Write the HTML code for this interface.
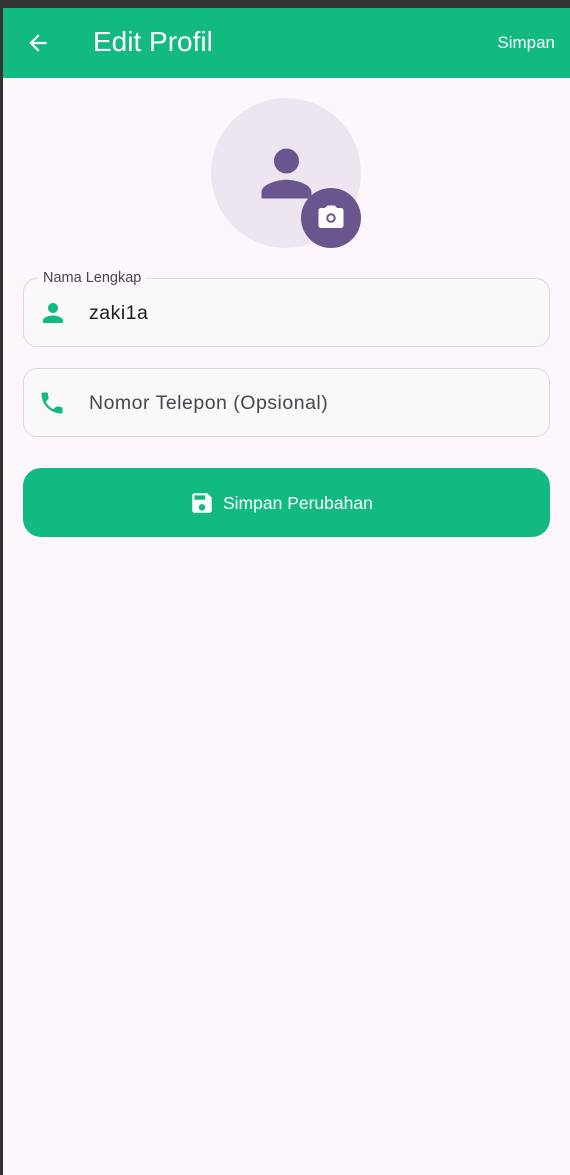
<!DOCTYPE html>
<html><head><meta charset="utf-8"><style>
*{margin:0;padding:0;box-sizing:border-box}
body{width:570px;height:1175px;background:#333;position:relative;overflow:hidden;font-family:"Liberation Sans",sans-serif}
.page{position:absolute;left:3px;top:8px;right:0;bottom:0;background:#fdf7fd}
.hdr{position:absolute;left:3px;top:8px;right:0;height:70px;background:#12b981;color:#fff}
.f{position:absolute;left:23px;width:527px;height:69px;border:1px solid #ddd8dd;border-radius:14px;background:#f9f9f9}
</style></head><body>
<div class="page"></div>
<div class="hdr">
<svg style="position:absolute;left:22px;top:22px" width="26" height="26" viewBox="0 0 24 24"><path d="M20 11H7.83l5.59-5.59L12 4l-8 8 8 8 1.41-1.41L7.830 13H20v-2z" fill="#fff"/></svg>
<div style="position:absolute;left:90px;top:18px;font-size:28px">Edit Profil</div>
<div style="position:absolute;right:15px;top:25px;font-size:17px">Simpan</div>
</div>
<div style="position:absolute;left:211px;top:98px;width:150px;height:150px;border-radius:50%;background:#ede6f1"></div>
<svg style="position:absolute;left:249px;top:136px" width="75" height="75" viewBox="0 0 24 24"><path d="M12 12c2.21 0 4-1.79 4-4s-1.79-4-4-4-4 1.79-4 4 1.79 4 4 4zm0 2c-2.67 0-8 1.34-8 4v2h16v-2c0-2.66-5.33-4-8-4z" fill="#6a568f"/></svg>
<div style="position:absolute;left:301px;top:188px;width:60px;height:60px;border-radius:50%;background:#6a568f"></div>
<svg style="position:absolute;left:316px;top:203px" width="30" height="30" viewBox="0 0 24 24"><path d="M9 2 7.17 4H4c-1.1 0-2 .9-2 2v12c0 1.1.9 2 2 2h16c1.1 0 2-.9 2-2V6c0-1.1-.9-2-2-2h-3.17L15 2H9z" fill="#fff"/><circle cx="12" cy="12" r="3" fill="none" stroke="#6a568f" stroke-width="1.6"/></svg>
<div class="f" style="top:278px"></div>
<div style="position:absolute;left:37px;top:270px;padding:0 6px;background:#fdf7fd;font-size:14.5px;color:#49454f">Nama Lengkap</div>
<svg style="position:absolute;left:38px;top:298px" width="30" height="30" viewBox="0 0 24 24"><path d="M12 12c2.21 0 4-1.79 4-4s-1.79-4-4-4-4 1.79-4 4 1.79 4 4 4zm0 2c-2.67 0-8 1.34-8 4v2h16v-2c0-2.66-5.33-4-8-4z" fill="#12b981"/></svg>
<div style="position:absolute;left:89px;top:302px;font-size:19.5px;color:#1d1b20;letter-spacing:.5px">zaki1a</div>
<div class="f" style="top:368px"></div>
<svg style="position:absolute;left:38px;top:389px" width="28" height="28" viewBox="0 0 24 24"><path d="M6.62 10.79c1.44 2.83 3.76 5.14 6.59 6.59l2.2-2.2c.27-.27.67-.36 1.02-.24 1.12.37 2.33.57 3.57.57.55 0 1 .45 1 1V20c0 .55-.45 1-1 1-9.39 0-17-7.61-17-17 0-.55.45-1 1-1h3.5c.55 0 1 .45 1 1 0 1.25.2 2.45.57 3.57.11.35.03.74-.25 1.02l-2.2 2.2z" fill="#12b981"/></svg>
<div style="position:absolute;left:89px;top:392px;font-size:19.5px;color:#49454f;letter-spacing:.5px">Nomor Telepon (Opsional)</div>
<div style="position:absolute;left:23px;top:468px;width:527px;height:69px;border-radius:18px;background:#12b981"></div>
<svg style="position:absolute;left:189px;top:490px" width="26" height="26" viewBox="0 0 24 24"><path d="M17 3H5c-1.11 0-2 .9-2 2v14c0 1.1.89 2 2 2h14c1.1 0 2-.9 2-2V7l-4-4zm-5 16c-1.66 0-3-1.34-3-3s1.34-3 3-3 3 1.34 3 3-1.34 3-3 3zm3-10H5V5h10v4z" fill="#fff"/></svg>
<div style="position:absolute;left:223px;top:493px;font-size:17.5px;color:#fff">Simpan Perubahan</div>
</body></html>
